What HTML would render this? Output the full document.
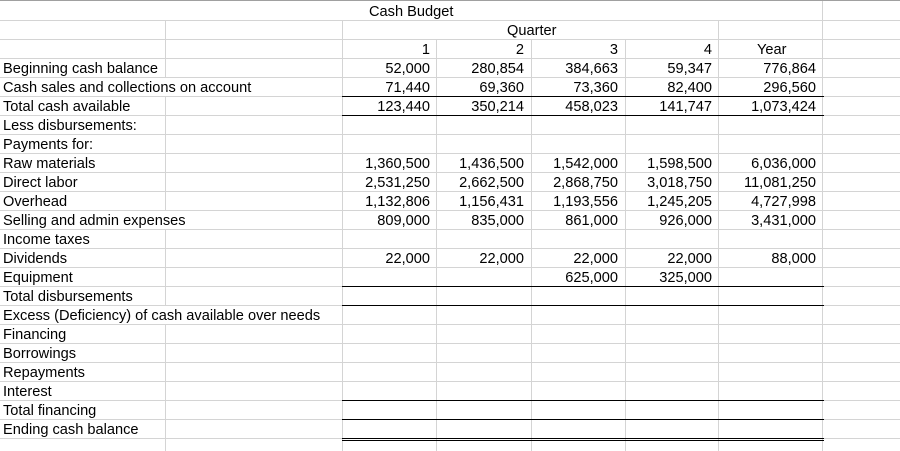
<!DOCTYPE html>
<html><head><meta charset="utf-8"><style>
body{margin:0;width:900px;height:451px;overflow:hidden;background:#fff;position:relative;font-family:"Liberation Sans",Arial,sans-serif;font-size:14.6px;color:#000}
.g{position:absolute;left:0;top:0;width:900px;height:451px;background:repeating-linear-gradient(to bottom,transparent 0,transparent 18px,#d4d4d4 18px,#d4d4d4 19px);background-position:0 2px}
.v{position:absolute;top:0;width:1px;height:451px;background:#d4d4d4}
.w{position:absolute;background:#fff}
.b{position:absolute;height:1px;background:#000;left:342px;width:482px}
.t{position:absolute;height:19px;line-height:19px;white-space:nowrap;margin-top:1px}
.l{left:3px}
.n{text-align:right}
.c1{left:343px;width:87px}.c2{left:437px;width:87px}.c3{left:532px;width:86px}.c4{left:626px;width:86px}.c5{left:719px;width:97px}
</style></head><body>
<div class="g"></div>
<div class="v" style="left:165px"></div><div class="v" style="left:342px"></div><div class="v" style="left:436px"></div><div class="v" style="left:531px"></div><div class="v" style="left:625px"></div><div class="v" style="left:718px"></div><div class="v" style="left:822px"></div>
<div style="position:absolute;left:0;top:0;width:900px;height:1px;background:#a0a0a0"></div>
<div class="w" style="left:0;top:1px;width:822px;height:19px"></div>
<div class="w" style="left:343px;top:21px;width:375px;height:18px"></div>
<div class="w" style="left:0;top:78px;width:342px;height:18px"></div>
<div class="w" style="left:0;top:211px;width:342px;height:18px"></div>
<div class="w" style="left:0;top:306px;width:342px;height:18px"></div>
<div class="b" style="top:96px"></div><div class="b" style="top:115px"></div>
<div class="b" style="top:286px"></div><div class="b" style="top:305px"></div>
<div class="b" style="top:400px"></div><div class="b" style="top:419px"></div>
<div class="b" style="top:438px"></div><div class="b" style="top:440px"></div>

<div class="t" style="left:369px;top:2px">Cash Budget</div>
<div class="t" style="left:507px;top:21px">Quarter</div>
<div class="t n c1" style="top:40px">1</div><div class="t n c2" style="top:40px">2</div><div class="t n c3" style="top:40px">3</div><div class="t n c4" style="top:40px">4</div><div class="t" style="left:757px;top:40px">Year</div>

<div class="t l" style="top:59px">Beginning cash balance</div>
<div class="t n c1" style="top:59px">52,000</div><div class="t n c2" style="top:59px">280,854</div><div class="t n c3" style="top:59px">384,663</div><div class="t n c4" style="top:59px">59,347</div><div class="t n c5" style="top:59px">776,864</div>
<div class="t l" style="top:78px">Cash sales and collections on account</div>
<div class="t n c1" style="top:78px">71,440</div><div class="t n c2" style="top:78px">69,360</div><div class="t n c3" style="top:78px">73,360</div><div class="t n c4" style="top:78px">82,400</div><div class="t n c5" style="top:78px">296,560</div>
<div class="t l" style="top:97px">Total cash available</div>
<div class="t n c1" style="top:97px">123,440</div><div class="t n c2" style="top:97px">350,214</div><div class="t n c3" style="top:97px">458,023</div><div class="t n c4" style="top:97px">141,747</div><div class="t n c5" style="top:97px">1,073,424</div>
<div class="t l" style="top:116px">Less disbursements:</div>
<div class="t l" style="top:135px">Payments for:</div>
<div class="t l" style="top:154px">Raw materials</div>
<div class="t n c1" style="top:154px">1,360,500</div><div class="t n c2" style="top:154px">1,436,500</div><div class="t n c3" style="top:154px">1,542,000</div><div class="t n c4" style="top:154px">1,598,500</div><div class="t n c5" style="top:154px">6,036,000</div>
<div class="t l" style="top:173px">Direct labor</div>
<div class="t n c1" style="top:173px">2,531,250</div><div class="t n c2" style="top:173px">2,662,500</div><div class="t n c3" style="top:173px">2,868,750</div><div class="t n c4" style="top:173px">3,018,750</div><div class="t n c5" style="top:173px">11,081,250</div>
<div class="t l" style="top:192px">Overhead</div>
<div class="t n c1" style="top:192px">1,132,806</div><div class="t n c2" style="top:192px">1,156,431</div><div class="t n c3" style="top:192px">1,193,556</div><div class="t n c4" style="top:192px">1,245,205</div><div class="t n c5" style="top:192px">4,727,998</div>
<div class="t l" style="top:211px">Selling and admin expenses</div>
<div class="t n c1" style="top:211px">809,000</div><div class="t n c2" style="top:211px">835,000</div><div class="t n c3" style="top:211px">861,000</div><div class="t n c4" style="top:211px">926,000</div><div class="t n c5" style="top:211px">3,431,000</div>
<div class="t l" style="top:230px">Income taxes</div>
<div class="t l" style="top:249px">Dividends</div>
<div class="t n c1" style="top:249px">22,000</div><div class="t n c2" style="top:249px">22,000</div><div class="t n c3" style="top:249px">22,000</div><div class="t n c4" style="top:249px">22,000</div><div class="t n c5" style="top:249px">88,000</div>
<div class="t l" style="top:268px">Equipment</div>
<div class="t n c3" style="top:268px">625,000</div><div class="t n c4" style="top:268px">325,000</div>
<div class="t l" style="top:287px">Total disbursements</div>
<div class="t l" style="top:306px">Excess (Deficiency) of cash available over needs</div>
<div class="t l" style="top:325px">Financing</div>
<div class="t l" style="top:344px">Borrowings</div>
<div class="t l" style="top:363px">Repayments</div>
<div class="t l" style="top:382px">Interest</div>
<div class="t l" style="top:401px">Total financing</div>
<div class="t l" style="top:420px">Ending cash balance</div>
</body></html>
